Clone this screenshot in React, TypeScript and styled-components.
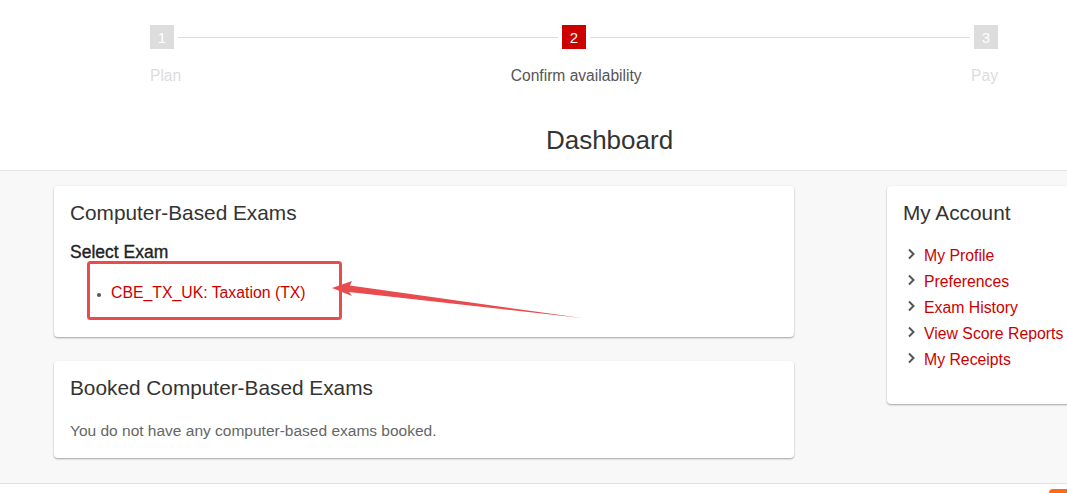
import React from 'react';
import styled, { createGlobalStyle } from 'styled-components';

const GlobalStyle = createGlobalStyle`
    html, body {
        margin: 0;
        padding: 0;
        overflow: hidden;
        background: #fff;
        font-family: "Liberation Sans", Arial, sans-serif;
        color: #333;
    }
`;

const Page = styled.div`
    width: 1067px;
    height: 493px;
    overflow: hidden;
    position: relative;
`;

const Header = styled.div`
    background: #fff;
    height: 171px;
    border-bottom: 1px solid #e6e6e6;
    box-sizing: border-box;
`;

const Steps = styled.div`
    display: flex;
    align-items: center;
    margin: 0 0 0 150px;
    padding-top: 25px;
    width: 848px;
`;

const StepBox = styled.div<{ active?: boolean }>`
    width: 24px;
    height: 24px;
    flex: none;
    display: flex;
    align-items: center;
    justify-content: center;
    font-size: 15px;
    color: #fff;
    background: ${p => (p.active ? '#cc0000' : '#dcdddc')};
`;

const StepLine = styled.div`
    flex: 1;
    height: 1px;
    background: #dcdcdc;
    margin: 0 4px;
`;

const StepLabels = styled.div`
    display: flex;
    justify-content: space-between;
    margin: 18px 0 0 150px;
    width: 848px;
    font-size: 15.6px;
    line-height: 18px;
`;

const StepLabel = styled.span<{ active?: boolean }>`
    color: ${p => (p.active ? '#555' : '#dcdcdc')};
    font-weight: 300;
`;

const Title = styled.h1`
    margin: 40px 0 0 0;
    padding-left: 152px;
    text-align: center;
    font-weight: 400;
    font-size: 26px;
    line-height: 30px;
    color: #333;
`;

const Body = styled.div`
    background: #f8f8f8;
    height: 313px;
    border-bottom: 1px solid #e2e2e2;
    display: grid;
    grid-template-columns: 740px 240px;
    column-gap: 93px;
    padding: 15px 0 0 54px;
    box-sizing: border-box;
`;

const Column = styled.div`
    display: flex;
    flex-direction: column;
    gap: 24px;
`;

const Card = styled.div<{ h: number }>`
    position: relative;
    background: #fff;
    border-radius: 4px;
    box-shadow: 0 1px 2px rgba(0, 0, 0, 0.35);
    height: ${p => p.h}px;
    padding: 15px 16px 0 16px;
    box-sizing: border-box;
`;

const CardTitle = styled.h2`
    margin: 0;
    font-size: 20.8px;
    font-weight: 400;
    line-height: 24px;
    color: #333;
`;

const SubTitle = styled.h3`
    margin: 17px 0 0 0;
    font-size: 17.5px;
    font-weight: 400;
    line-height: 20px;
    color: #222;
    -webkit-text-stroke: 0.35px #222;
`;

const ExamList = styled.ul`
    margin: 21px 0 0 0;
    padding-left: 41px;
    font-size: 15px;
    line-height: 20px;
    color: #555;
    li::marker {
        font-size: 12px;
    }
`;

const RedLink = styled.a`
    color: #cc0000;
    text-decoration: none;
    font-size: 15.8px;
`;

const EmptyText = styled.p`
    margin: 22px 0 0 0;
    font-size: 15.5px;
    color: #666;
    line-height: 18px;
`;

const LinkList = styled.ul`
    list-style: none;
    margin: 18px 0 0 0;
    padding: 0 0 0 4px;
`;

const LinkItem = styled.li`
    display: flex;
    align-items: center;
    gap: 8px;
    height: 26px;
`;

const Chevron = styled.svg`
    width: 9px;
    height: 12px;
    flex: none;
    margin-top: -4px;
`;

const Annotation = styled.svg`
    position: absolute;
    left: 0;
    top: 0;
    pointer-events: none;
`;

const Corner = styled.div`
    position: absolute;
    right: 0;
    bottom: 0;
    width: 18px;
    height: 4px;
    background: #ff6a1a;
    border-radius: 8px 0 0 0;
`;

const accountLinks = ['My Profile', 'Preferences', 'Exam History', 'View Score Reports', 'My Receipts'];

const App: React.FC = () => {
    return <Page>
        <GlobalStyle />
        <Header>
            <Steps>
                <StepBox>1</StepBox>
                <StepLine />
                <StepBox active>2</StepBox>
                <StepLine />
                <StepBox>3</StepBox>
            </Steps>
            <StepLabels>
                <StepLabel>Plan</StepLabel>
                <StepLabel active>Confirm availability</StepLabel>
                <StepLabel>Pay</StepLabel>
            </StepLabels>
            <Title>Dashboard</Title>
        </Header>
        <Body>
            <Column>
                <Card h={151}>
                    <CardTitle>Computer-Based Exams</CardTitle>
                    <SubTitle>Select Exam</SubTitle>
                    <ExamList>
                        <li><RedLink href="#">CBE_TX_UK: Taxation (TX)</RedLink></li>
                    </ExamList>
                </Card>
                <Card h={97}>
                    <CardTitle>Booked Computer-Based Exams</CardTitle>
                    <EmptyText>You do not have any computer-based exams booked.</EmptyText>
                </Card>
            </Column>
            <Column>
                <Card h={218}>
                    <CardTitle>My Account</CardTitle>
                    <LinkList>
                        {accountLinks.map(link =>
                            <LinkItem key={link}>
                                <Chevron viewBox="0 0 9 12">
                                    <path d="M2 1.5 L6.5 6 L2 10.5" fill="none" stroke="#555" strokeWidth="2" />
                                </Chevron>
                                <RedLink href="#">{link}</RedLink>
                            </LinkItem>
                        )}
                    </LinkList>
                </Card>
            </Column>
        </Body>
        {/* screenshot annotation: red box and arrow */}
        <Annotation width="1067" height="493" viewBox="0 0 1067 493">
            <rect x="88.5" y="262.5" width="252" height="56" rx="2" fill="none" stroke="#e84c4f" strokeWidth="3" />
            <polygon points="332,288 352,281 350,285.5 582,318 349,292 352,296" fill="#e84c4f" />
        </Annotation>
        <Corner />
    </Page>;
};

export default App;
